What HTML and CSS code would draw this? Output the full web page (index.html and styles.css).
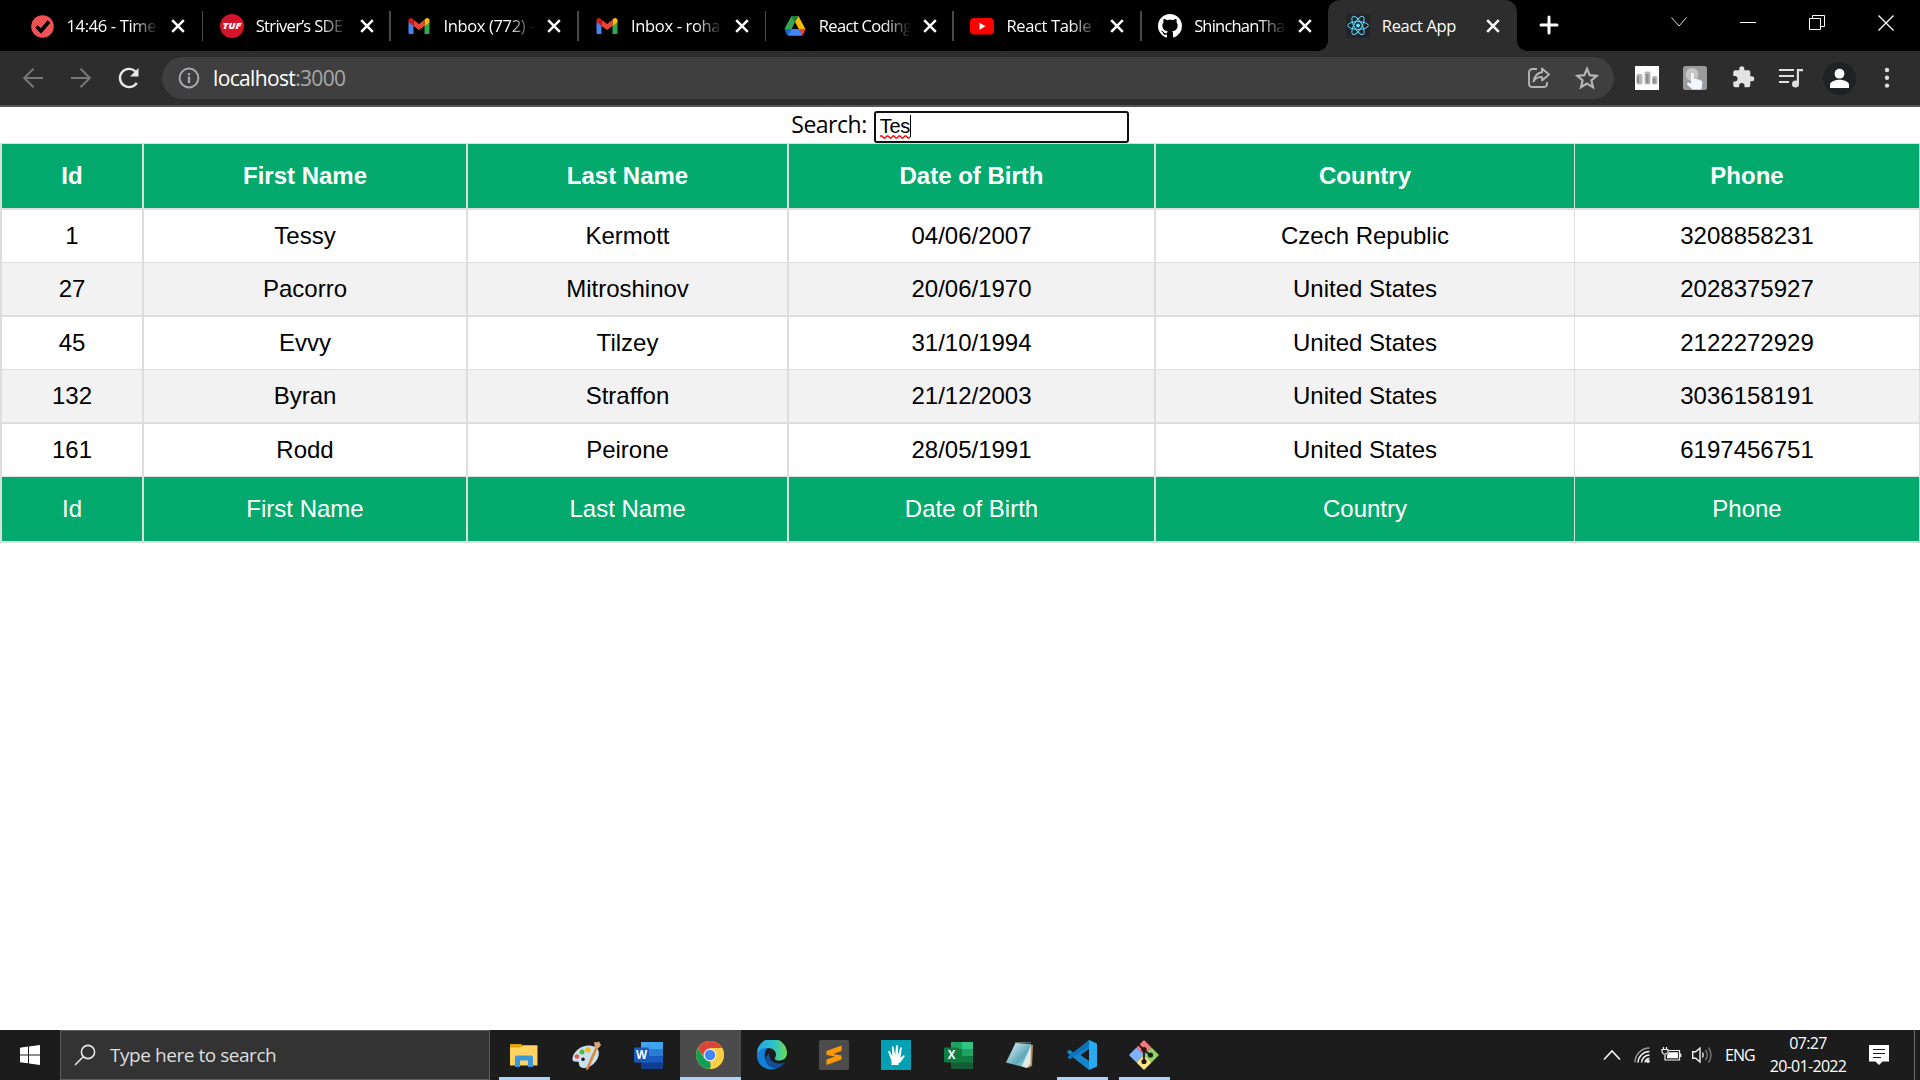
FILE: index.html
```html
<!DOCTYPE html>
<html lang="en">
<head>
<meta charset="utf-8">
<title>React App</title>
<link rel="stylesheet" href="styles.css">
</head>
<body>
<svg class="defs" width="0" height="0">
  <defs>
    <symbol id="x" viewBox="0 0 24 24"><path d="M6.2 6.2 17.8 17.8M17.8 6.2 6.2 17.8" stroke="#fff" stroke-width="2.5" fill="none"/></symbol>
    <symbol id="gmail" viewBox="0 0 24 24">
      <path d="M1.5 8v10.4c0 1 .7 1.6 1.6 1.6h3.4V10.500z" fill="#4285f4"/>
      <path d="M22.500 8v10.400c0 1-.7 1.600-1.600 1.600h-3.400V10.500z" fill="#34a853"/>
      <path d="M17.500 5.800v6.200l5-3.700V6.200c0-2-2.200-3-3.800-1.800z" fill="#fbbc04"/>
      <path d="M6.500 12V5.800l5.500 4.100 5.500-4.100V12L12 16.100z" fill="#ea4335"/>
      <path d="M1.500 6.200v2.100l5 3.700V5.800L5.300 4.400C3.700 3.200 1.500 4.200 1.500 6.200z" fill="#c5221f"/>
    </symbol>
  </defs>
</svg>

<header class="tabstrip">
  <div class="tab first">
    <svg class="fav" viewBox="0 0 24 24"><circle cx="11.500" cy="12.500" r="11.300" fill="#ee5253"/><path d="M5.500 12.500l4.500 4.500 8-9.500" stroke="#000" stroke-width="3.600" fill="none"/></svg>
    <span class="title">14:46 - Time</span><svg class="close"><use href="#x"/></svg>
  </div>
  <div class="tab">
    <svg class="fav" viewBox="0 0 24 24"><circle cx="12" cy="12" r="12" fill="#d5132b"/><text x="12" y="15" class="tuf" textLength="19" lengthAdjust="spacingAndGlyphs">TUF</text></svg>
    <span class="title tight">Striver’s SDE</span><svg class="close"><use href="#x"/></svg>
  </div>
  <div class="tab">
    <svg class="fav"><use href="#gmail"/></svg>
    <span class="title">Inbox (772) -</span><svg class="close"><use href="#x"/></svg>
  </div>
  <div class="tab">
    <svg class="fav"><use href="#gmail"/></svg>
    <span class="title">Inbox - roha</span><svg class="close"><use href="#x"/></svg>
  </div>
  <div class="tab">
    <svg class="fav" viewBox="0 0 24 24"><path d="M8.500 2h7L12 8.100z" fill="#188038"/><path d="M8.500 2 1.500 14.700l3 .5h4L12 8.100z" fill="#34a853"/><path d="M15.500 2 12 8.100l4 7.100h6.500z" fill="#fbbc04"/><path d="M1.500 15h7l-3.800 6.300c-.5-.3-.8-.6-1-1z" fill="#1967d2"/><path d="M8.300 15h7.800l3.400 6.300c-.5.300-1 .4-1.500.4H6c-.5 0-1-.1-1.400-.4z" fill="#4285f4"/><path d="M15.500 15h7l-2 5c-.2.500-.6 1-1 1.300z" fill="#ea4335"/></svg>
    <span class="title tight">React Coding</span><svg class="close"><use href="#x"/></svg>
  </div>
  <div class="tab">
    <svg class="fav" viewBox="0 0 24 24"><rect x="0" y="4" width="24" height="16.500" rx="4" fill="#f00"/><path d="M9.500 8.700v7l6-3.500z" fill="#fff"/></svg>
    <span class="title">React Table T</span><svg class="close"><use href="#x"/></svg>
  </div>
  <div class="tab last">
    <svg class="fav" viewBox="0 0 16 16"><path fill="#fff" d="M8 0C3.580 0 0 3.580 0 8c0 3.540 2.290 6.530 5.470 7.590.4.070.55-.17.55-.38 0-.19-.01-.82-.01-1.490-2.010.37-2.530-.49-2.690-.94-.09-.23-.48-.94-.82-1.130-.28-.15-.68-.52-.01-.53.63-.01 1.080.58 1.230.82.72 1.210 1.870.87 2.330.66.070-.52.28-.87.51-1.070-1.780-.2-3.640-.89-3.640-3.950 0-.87.31-1.590.82-2.150-.08-.2-.36-1.020.08-2.120 0 0 .67-.21 2.200.82.64-.18 1.320-.27 2-.27s1.360.09 2 .27c1.530-1.040 2.200-.82 2.200-.82.44 1.100.16 1.920.08 2.120.51.56.82 1.270.82 2.150 0 3.070-1.870 3.750-3.650 3.950.29.25.54.73.54 1.480 0 1.070-.01 1.930-.01 2.200 0 .21.15.46.55.38A8.010 8.010 0 0 0 16 8c0-4.420-3.580-8-8-8z"/></svg>
    <span class="title tighter">ShinchanTha</span><svg class="close"><use href="#x"/></svg>
  </div>
  <div class="tab active">
    <svg class="fav" viewBox="0 0 24 24"><rect width="24" height="24" rx="2" fill="#20232a" fill-opacity=".9"/><g fill="none" stroke="#61dafb" stroke-width="1"><ellipse cx="12" cy="11.500" rx="10.300" ry="3.900"/><ellipse cx="12" cy="11.500" rx="10.300" ry="3.900" transform="rotate(60 12 11.500)"/><ellipse cx="12" cy="11.500" rx="10.300" ry="3.900" transform="rotate(120 12 11.500)"/></g><circle cx="12" cy="11.500" r="2" fill="#61dafb"/></svg>
    <span class="title">React App</span><svg class="close"><use href="#x"/></svg>
  </div>
  <svg class="newtab" viewBox="0 0 24 24"><path d="M12 4v16M4 12h16" stroke="#fff" stroke-width="3" stroke-linecap="round"/></svg>
  <div class="controls">
    <svg viewBox="0 0 16 16"><path d="M.5 3.500 8 12 15.500 3.500" stroke="#ddd"/></svg>
    <svg viewBox="0 0 16 16"><path d="M0 8.500h16"/></svg>
    <svg viewBox="0 0 16 16"><path d="M.5 4.500h11v11H.5zM3.500 4V1.500h12v11H12"/></svg>
    <svg viewBox="0 0 16 16"><path d="M.5 1.500l15 15M15.500 1.500l-15 15" stroke-width="1.300"/></svg>
  </div>
</header>

<nav class="toolbar">
  <svg class="ico dim" viewBox="0 0 24 24"><path d="M22 12H3.500M12.500 2.800 3.200 12l9.300 9.200"/></svg>
  <svg class="ico dim" viewBox="0 0 24 24"><path d="M2 12h18.500M11.500 2.800l9.300 9.200-9.300 9.200"/></svg>
  <svg class="ico reload" viewBox="0 0 24 24"><path d="M19.800 16.800A9.100 9.100 0 1 1 18.500 5.500" stroke="#e8e8e8" stroke-width="2.400"/><path d="M21.500 2v8.500H13z" fill="#e8e8e8" stroke="none"/></svg>
  <div class="omnibox">
    <svg class="ico info" viewBox="0 0 24 24"><circle cx="12" cy="12" r="9.400" stroke="#a8abb0" stroke-width="2"/><path d="M12 10.500v6.500M12 7v2.200" stroke="#a8abb0" stroke-width="2.200"/></svg>
    <span class="url">localhost<span class="port">:3000</span></span>
    <svg class="ico" viewBox="0 0 24 24"><path d="M10 3H5.500C3.500 3 2 4.500 2 6.500v11C2 19.500 3.500 21 5.500 21h11c2 0 3.500-1.500 3.500-3.500V16" stroke="#b4b4b4" stroke-width="1.900"/><path d="M15 2.500 22 8.500l-7 6v-3.600c-4 0-6.500 1.300-8.500 4.600C7.200 10.500 9.700 7 15 6.200z" stroke="#b4b4b4" stroke-width="1.900" stroke-linejoin="round"/></svg>
    <svg class="ico" viewBox="0 0 24 24"><path d="M12 2.800l2.700 6.400 7 .6-5.300 4.600 1.600 6.800-6-3.600-6 3.600 1.600-6.800L2.300 9.800l7-.6z" stroke="#b4b4b4" stroke-width="2.200"/></svg>
  </div>
  <div class="exts">
    <svg class="ico" viewBox="0 0 24 24"><path fill="#fff" stroke="none" d="M0 0h24v24H0z"/><g stroke="none" fill="#b5b5b5"><rect x="1.500" y="8" width="6" height="10.500" rx="2"/><rect x="9.500" y="5.500" width="6" height="13" rx="2"/><rect x="17" y="10" width="5.500" height="8.500" rx="2"/></g><g stroke="none" fill="#8c8c8c"><path d="M2 10h2v7H2zM11 8h2.500v9H11zM18 12h2.500v5H18z"/></g></svg>
    <svg class="ico" viewBox="0 0 24 24"><rect width="24" height="24" rx="2.500" fill="#9b9b9b" stroke="none"/><circle cx="9" cy="8.500" r="6.500" fill="#c4c4c4" stroke="none"/><path d="M8 8c0-1.800 2.800-1.800 2.800 0v5l1 .2c.8-1 2.200-.6 2.600.5.900-.7 2-.3 2.400.7 1.700-.2 2.600.8 2.600 2.200l-.8 6.900H9.500L4 18.200c-.3-1.500 1.500-2 2.600-1.200L8 18z" fill="#f2f7ff" stroke="none"/></svg>
    <svg class="ico" viewBox="0 0 24 24"><path transform="translate(.3 -.8)" fill="#e2e2e2" stroke="none" d="M20.500 11H19V7a2 2 0 0 0-2-2h-4V3.500a2.500 2.500 0 0 0-5 0V5H4a2 2 0 0 0-2 2v3.800h1.500a2.700 2.700 0 0 1 0 5.400H2V20a2 2 0 0 0 2 2h3.800v-1.500a2.700 2.700 0 0 1 5.400 0V22H17a2 2 0 0 0 2-2v-4h1.500a2.500 2.500 0 0 0 0-5z"/></svg>
    <svg class="ico" viewBox="0 0 24 24"><path d="M0 4h15M0 10h15M0 16h10" stroke="#dedede" stroke-width="2.200"/><path d="M18.900 18V4.200H24" stroke="#dedede" stroke-width="2.200"/><circle cx="16.500" cy="18" r="3.500" fill="#dedede" stroke="none"/></svg>
    <svg class="avatar" viewBox="0 0 33 33"><circle cx="16.500" cy="16.500" r="16.500" fill="#202124"/><circle cx="16.500" cy="11.700" r="4.900" fill="#fff"/><path d="M7 26v-3.200c0-3.500 6-5 9.500-5s9.500 1.500 9.500 5V26z" fill="#fff"/></svg>
    <svg class="ico" viewBox="0 0 24 24"><g fill="#dedede" stroke="none"><circle cx="12" cy="4" r="2.200"/><circle cx="12" cy="11.800" r="2.200"/><circle cx="12" cy="19.600" r="2.200"/></g></svg>
  </div>
</nav>

<main class="page">
  <div class="search"><label>Search:</label><div class="field"><span class="typed">Tes<svg class="squiggle" viewBox="0 0 31 4"><path d="M0 1l2 0 2 2h1l2-2h1l2 2h1l2-2h1l2 2h1l2-2h1l2 2h1l2-2h1l2 2h1l1-1"/></svg></span></div></div>
  <table class="grid">
    <colgroup><col class="c1"><col class="c2"><col class="c3"><col class="c4"><col class="c5"><col class="c6"></colgroup>
    <thead><tr><th>Id</th><th>First Name</th><th>Last Name</th><th>Date of Birth</th><th>Country</th><th>Phone</th></tr></thead>
    <tbody>
      <tr><td>1</td><td>Tessy</td><td>Kermott</td><td>04/06/2007</td><td>Czech Republic</td><td>3208858231</td></tr>
      <tr><td>27</td><td>Pacorro</td><td>Mitroshinov</td><td>20/06/1970</td><td>United States</td><td>2028375927</td></tr>
      <tr><td>45</td><td>Evvy</td><td>Tilzey</td><td>31/10/1994</td><td>United States</td><td>2122272929</td></tr>
      <tr><td>132</td><td>Byran</td><td>Straffon</td><td>21/12/2003</td><td>United States</td><td>3036158191</td></tr>
      <tr><td>161</td><td>Rodd</td><td>Peirone</td><td>28/05/1991</td><td>United States</td><td>6197456751</td></tr>
    </tbody>
    <tfoot><tr><td>Id</td><td>First Name</td><td>Last Name</td><td>Date of Birth</td><td>Country</td><td>Phone</td></tr></tfoot>
  </table>
</main>

<footer class="taskbar">
  <div class="start"><svg width="20" height="20" viewBox="0 0 20 20"><path fill="#fff" d="M0 2.700 8 1.600V9.400H0zM9 1.400 20 0v9.400H9zM0 10.400h8v7.900L0 17.200zM9 10.400h11V20L9 18.500z"/></svg></div>
  <div class="tasksearch">
    <svg width="22" height="22" viewBox="0 0 22 22"><g fill="none" stroke="#e6e6e6" stroke-width="1.600"><circle cx="14" cy="8" r="6.600"/><path d="M9.200 12.800 1 21"/></g></svg>
    <span>Type here to search</span>
  </div>
  <div class="apps">
    <div class="app open"><svg viewBox="0 0 30 30"><path d="M1 4h11l2 2v3H1z" fill="#e0a10a"/><path d="M1 7.500h10l3-2.300h14.500V25.500H1z" fill="#ffd262"/><path d="M6 27V17.500c0-1.200.8-2 2-2h14c1.200 0 2 .8 2 2V27h-5v-6.500h-8V27z" fill="#3b97dc"/></svg></div>
    <div class="app"><svg viewBox="0 0 30 30"><path d="M21 6C13 4 3 10 1.500 18c-.5 3 1.500 4 3.500 3.500 2-.4 3 .5 3 2 0 5 6 5.500 10 3.500 7-3 12-12 9-17.500C26 7.500 24 6.500 21 6zM12 21a1.800 1.800 0 1 1 .1 0z" fill="#c9e0ee"/><circle cx="6" cy="16.500" r="2.300" fill="#e4584f"/><circle cx="11" cy="12" r="2.500" fill="#52b84b"/><circle cx="17" cy="9.800" r="2.600" fill="#fcb813"/><path d="M25 7l1.500.8L17 29l-1.500.4.5-2z" fill="#e08732" stroke="#e08732"/><path d="M23 2c2 1 3.500-.5 5-.5L30 5c-1 1-1.500 3-4 3.500L23.500 7c.5-2-.5-3-.5-5z" fill="#d2a679"/></svg></div>
    <div class="app"><svg viewBox="0 0 30 30"><path fill="#41a5ee" d="M8 2h22v7H8z"/><path fill="#2b7cd3" d="M8 9h22v7H8z"/><path fill="#185abd" d="M8 16h22v7H8z"/><path fill="#103f91" d="M8 22.500h22V29H8z"/><rect x="1" y="7.500" width="15" height="15" rx="1" fill="#185abd"/><text x="8.500" y="19" class="office">W</text></svg></div>
    <div class="app open current"><svg viewBox="0 0 30 30"><circle cx="15" cy="15" r="14" fill="#fcc934"/><path d="M2.900 8A14 14 0 0 1 27.100 8L15 9.200 9 17z" fill="#db4437"/><path d="M2.900 8A14 14 0 0 0 15 29l6-10.500-6 2.500-6-3z" fill="#0f9d58"/><path d="M27.100 8H15v13l1 7.900A14 14 0 0 0 27.100 8z" fill="#ffcd40"/><path d="M15 29l6-10.500" stroke="#ffcd40"/><circle cx="15" cy="15" r="6.400" fill="#f1f1f1"/><circle cx="15" cy="15" r="5.200" fill="#4285f4"/></svg></div>
    <div class="app"><svg viewBox="0 0 30 30"><defs><linearGradient id="eg"><stop offset="0" stop-color="#2aa4e3"/><stop offset=".55" stop-color="#2cc3c9"/><stop offset="1" stop-color="#6fdb4d"/></linearGradient></defs><path d="M0 14A15 15 0 0 1 30 13c0 5-3.500 7.500-8 7.500-3 0-5-1.300-4-2.800C21 13 17 8 11 8 6 8 2 11 0 14z" fill="url(#eg)"/><path d="M0 14C2 9.500 7 7.500 11 8c-3 2-4 6-3 10 1.500 6 7 10 13.500 9.500C11 33-1 26 0 14z" fill="#1080d8"/><path d="M11.500 14C6 18 9 28 19 28.500c4-.5 7.500-3.500 9-6.500-8 4-17-.5-15.500-8z" fill="#134f94"/></svg></div>
    <div class="app"><svg viewBox="0 0 30 30"><rect width="30" height="30" rx="2" fill="#4c4c4c"/><path d="M7.500 11 22.500 5.500V11L14 14l8.500 1.500v4L7.500 25v-5.500l8.500-3L7.500 15z" fill="#ff9800"/></svg></div>
    <div class="app"><svg viewBox="0 0 30 30"><path d="M0 0h30v30H0z" fill="#009fb2"/><path d="M10.500 25v-4L7.300 12c-.4-1.300 1-1.800 1.600-.6l2.500 4.600-.6-8.800c0-1.300 1.700-1.300 1.900 0l1.500 8 .8-9.200c.1-1.300 1.800-1.200 1.900 0l.2 9.300 2-7.300c.4-1.300 2-.9 1.700.4L19.500 18l2.700-2.500c1-.8 2 .2 1.200 1.200-2 2.600-3 5.300-5.900 6.800V25z" fill="#fff"/></svg></div>
    <div class="app"><svg viewBox="0 0 30 30"><path fill="#21a366" d="M8 2h11v7H8z"/><path fill="#33c481" d="M19 2h11v7H19z"/><path fill="#107c41" d="M8 9h11v14H8z"/><path fill="#21a366" d="M19 9h11v7H19z"/><path fill="#107c41" d="M19 16h11v7H19z"/><path fill="#185c37" d="M8 22.500h22V29H8z"/><rect x="1" y="7.500" width="15" height="15" rx="1" fill="#107c41"/><text x="8.500" y="19" class="office">X</text></svg></div>
    <div class="app"><svg viewBox="0 0 30 30"><defs><linearGradient id="np" x2="1" y2="1"><stop offset="0" stop-color="#e8f6f9"/><stop offset=".6" stop-color="#5fa9b8"/><stop offset="1" stop-color="#cfe9ee"/></linearGradient></defs><path d="M25 4l3 1-1 21-4 2z" fill="#b78d4b"/><path d="M10.500 3 26 4l-4 24L1 22.500z" fill="url(#np)"/><path d="M26 5l-9 21 5 2 3.500-4z" fill="#dfe9eb"/><path d="M10.500 2.500h16" stroke="#bbb" stroke-dasharray="1 1"/></svg></div>
    <div class="app open"><svg viewBox="0 0 30 30"><path d="M22 0 7.500 13.500 2.500 9.700.500 11v2L22 30z" fill="#1687cf"/><path d="M.500 17 2.500 19.500 7.500 16 22 7V0L.500 17z" fill="#0b74bd"/><path d="M22 0l7 3c.6.300 1 .8 1 1.500v21c0 .7-.4 1.200-1 1.500l-7 3z" fill="#29a9f0"/><path d="M22 9v12l-8.500-6z" fill="#1c1c1c"/></svg></div>
    <div class="app open"><svg viewBox="0 0 30 30"><g stroke-linejoin="round" stroke-width="1.500"><path d="M15 1l6.500 6.500L15 14 8.500 7.500z" fill="#f4787b" stroke="#f4787b"/><path d="M7.500 8.500 14 15l-6.500 6.500L1 15z" fill="#80b3ff" stroke="#80b3ff"/><path d="M22.500 8.500 29 15l-6.500 6.500L16 15z" fill="#8dd35f" stroke="#8dd35f"/><path d="M15 16l6.500 6.500L15 29l-6.500-6.500z" fill="#ffe680" stroke="#ffe680"/></g><path d="M8 3l7 7v12M15 10l6 5" stroke="#1c1c1c" stroke-width="1.800" fill="none"/><circle cx="15" cy="9.500" r="2.600" fill="#1c1c1c"/><circle cx="15" cy="21.500" r="2.600" fill="#1c1c1c"/><circle cx="21.500" cy="15" r="2.600" fill="#1c1c1c"/></svg></div>
  </div>
  <div class="tray">
    <svg class="up" width="18" height="12" viewBox="0 0 18 12"><path d="M1 10.500 9 2l8 8.500" stroke-width="1.700"/></svg>
    <svg class="wifi" width="18" height="18" viewBox="0 0 18 18"><g stroke-width="1.500"><path d="M2 16.500A14.500 14.500 0 0 1 16.500 2" stroke="#999"/><path d="M5 16.500A11.500 11.500 0 0 1 16.500 5.500"/><path d="M8.500 16.500a8 8 0 0 1 8-7.500"/><path d="M12 16.500a4.500 4.500 0 0 1 4.500-4"/></g><circle cx="15" cy="15.300" r="1.700" fill="#fff" stroke="none"/></svg>
    <svg class="bat" width="22" height="16" viewBox="0 0 22 16"><path d="M7.500 3.500h11v9.500H5M19.700 6.500v3.500M2.500 0v3M5.500 0v3M4 7.500V13h2" stroke-width="1.200"/><path d="M1 2.500h6V5L5.500 7h-3L1 5z" stroke-width="1.200"/><path d="M8 5.300h9v6H6v-3z" fill="#fff" stroke="none"/></svg>
    <svg class="vol" width="22" height="20" viewBox="0 0 22 20"><path d="M1.700 6.700h3L9 3v14l-4.300-3.700h-3z" stroke-width="1.400"/><path d="M11.500 7.500q1.500 2.500 0 5" stroke-width="1.400"/><path d="M14.500 5q3.500 5 0 10M17.500 2.500q5 7.500 0 15" stroke="#777" stroke-width="1.400"/></svg>
    <span class="lang">ENG</span>
    <div class="clock"><span class="time">07:27</span><span class="date">20-01-2022</span></div>
    <svg class="note" width="20" height="20" viewBox="0 0 20 20"><path d="M0 0h20v16.500h-6.500L10 20l-3.500-3.500H0z" fill="#fff" stroke="none"/><path d="M4 4.500h12M4 8.500h12M4 12.500h8" stroke="#1c1c1c" stroke-width="1.200"/></svg>
    <i class="peek"></i>
  </div>
</footer>
</body>
</html>
```
FILE: styles.css
```css
* { box-sizing: border-box; }
body {
  margin: 0;
  width: 1920px;
  height: 1080px;
  overflow: hidden;
  display: flex;
  flex-direction: column;
  background: #fff;
  font-family: "Open Sans", "Noto Sans", sans-serif;
}
svg { display: block; flex: none; }
.defs { position: absolute; }

/* tab strip */
.tabstrip { height: 51px; background: #000; display: flex; padding-left: 14px; }
.tab {
  width: 187.7px;
  height: 51px;
  flex: none;
  display: flex;
  align-items: center;
  padding-left: 18px;
  position: relative;
}
.tab.first { padding-left: 16.500px; }
.tab::after {
  content: "";
  width: 1.500px;
  height: 30px;
  background: #4a4a4a;
  position: absolute;
  right: -1.500px;
  top: 11px;
}
.tab.last::after, .tab.active::after { display: none; }
.fav { width: 24px; height: 24px; }
.title {
  width: 92px;
  margin-left: 12px;
  font-size: 16.500px;
  letter-spacing: -.35px;
  line-height: 24px;
  color: #fff;
  white-space: nowrap;
  -webkit-mask-image: linear-gradient(90deg, #000 70%, transparent);
  mask-image: linear-gradient(90deg, #000 70%, transparent);
}
.title.tight { letter-spacing: -.65px; }
.title.tighter { letter-spacing: -.8px; }
.close { width: 24px; height: 24px; margin-left: 7px; }
.tuf { font: italic 900 8px "Open Sans", sans-serif; fill: #fff; text-anchor: middle; }
.tab.active { background: #2d2d2d; border-radius: 12px 12px 0 0; width: 189px; }
.tab.active .title { -webkit-mask-image: none; mask-image: none; }
.tab.active::before {
  content: "";
  position: absolute;
  left: -10px;
  right: -10px;
  bottom: 0;
  height: 10px;
  background:
    radial-gradient(circle at 0 0, transparent 9.500px, #2d2d2d 10px) left / 10px 10px no-repeat,
    radial-gradient(circle at 100% 0, transparent 9.500px, #2d2d2d 10px) right / 10px 10px no-repeat;
}
.newtab { width: 24px; height: 24px; margin: 13px 0 0 20.500px; }
.controls { display: flex; width: 275px; margin-left: auto; height: 43px; align-items: center; }
.controls svg { width: 16px; height: 16px; margin: 0 auto; overflow: visible; fill: none; stroke: #fff; }

/* toolbar */
.toolbar {
  height: 56px;
  background: #2d2d2d;
  border-bottom: 2px solid #565656;
  display: flex;
  align-items: center;
  padding-left: 21px;
  gap: 24px;
}
.ico { width: 24px; height: 24px; fill: none; stroke: #fff; }
.dim { stroke: #777; stroke-width: 2; }
.reload { margin-right: -3px; }
.omnibox {
  width: 1452px;
  height: 42px;
  border-radius: 21px;
  background: #3f3f3f;
  display: flex;
  align-items: center;
  gap: 24px;
  padding: 0 15px 0 15px;
}
.url { flex: 1; margin-left: -12px; font-size: 21px; letter-spacing: -.65px; line-height: 30px; color: #fff; }
.port { color: #a8a8a8; }
.exts { display: flex; align-items: center; gap: 24px; margin-left: -3px; }
.avatar { width: 33px; height: 33px; margin: 0 -5px 0 -4px; }

/* page */
.page { flex: 1; background: #fff; }
.search { height: 36px; display: flex; justify-content: center; }
.search label { font-size: 23px; line-height: 35px; letter-spacing: -.5px; margin-right: 7px; }
.field {
  width: 255px;
  height: 32px;
  margin-top: 4px;
  border: 2px solid #101010;
  border-radius: 3px;
  padding-left: 4px;
  display: flex;
  align-items: flex-start;
  padding-top: 2px;
}
.typed {
  position: relative;
  font: 20px/22px "Liberation Sans", Arial, sans-serif;
  letter-spacing: -.3px;
  border-right: 1px solid #000;
}
.squiggle { position: absolute; left: 0; top: 20px; width: 31px; height: 4px; fill: none; stroke: #f00; stroke-width: 1.300; }
.grid {
  width: 1920px;
  table-layout: fixed;
  border-collapse: separate;
  border-spacing: 0;
  font: 24px/27px "Liberation Sans", Arial, sans-serif;
  text-align: center;
  color: #000;
}
.c1 { width: 144px; }
.c2 { width: 324px; }
.c3 { width: 321px; }
.c4 { width: 367px; }
.c5 { width: 419px; }
.c6 { width: 345px; }
.grid th, .grid td {
  height: 53px;
  padding: 0 0 2px;
  border: 0 solid #ddd;
  border-right-width: 2px;
  border-bottom-width: 1px;
}
.grid tr > :first-child { border-left-width: 2px; }
.grid tr > :nth-child(n+5) { border-right-width: 1px; }
.grid tbody tr:nth-child(even) td { height: 54px; border-bottom-width: 2px; background: #f2f2f2; }
.grid thead th { height: 67px; border-top-width: 1px; border-bottom-width: 2px; }
.grid tfoot td { height: 66px; border-bottom-width: 2px; }
.grid thead th, .grid tfoot td { background: #04aa6d; color: #fff; }

/* taskbar */
.taskbar { height: 50px; background: #1c1c1c; display: flex; color: #fff; }
.start { width: 60px; display: grid; place-items: center; }
.tasksearch {
  width: 430px;
  background: #333;
  border: 1px solid #5c5c5c;
  display: flex;
  align-items: center;
  padding-left: 13px;
  gap: 14px;
  color: #ddd;
  font-size: 19px;
  letter-spacing: -.45px;
}
.apps { display: flex; margin-left: 3px; }
.app { width: 62px; display: grid; place-items: center; position: relative; }
.app svg { width: 30px; height: 30px; margin-right: 1px; }
.app.current { background: #4b4b4b; margin-left: 1px; width: 61px; }
.app.open::after {
  content: "";
  position: absolute;
  left: 6px;
  bottom: 0;
  width: 51px;
  height: 3px;
  background: #a9d3fb;
}
.app.current::after { left: 0; width: 61px; }
.office { font: bold 11.500px "Open Sans", sans-serif; fill: #fff; text-anchor: middle; }
.tray { display: flex; align-items: center; margin-left: auto; }
.tray svg { fill: none; stroke: #f2f2f2; }
.up { margin-right: 12px; }
.wifi { margin-right: 10px; }
.bat { margin-right: 8px; }
.vol { margin-right: 12px; }
.lang { width: 45px; font-size: 16px; letter-spacing: -1px; line-height: 50px; }
.clock { width: 76px; margin-right: 23px; display: flex; flex-direction: column; align-items: center; font-size: 16px; letter-spacing: -.7px; line-height: 23px; white-space: nowrap; }
.peek { width: 1px; height: 50px; background: #6a6a6a; margin: 0 5px 0 25px; }
```
